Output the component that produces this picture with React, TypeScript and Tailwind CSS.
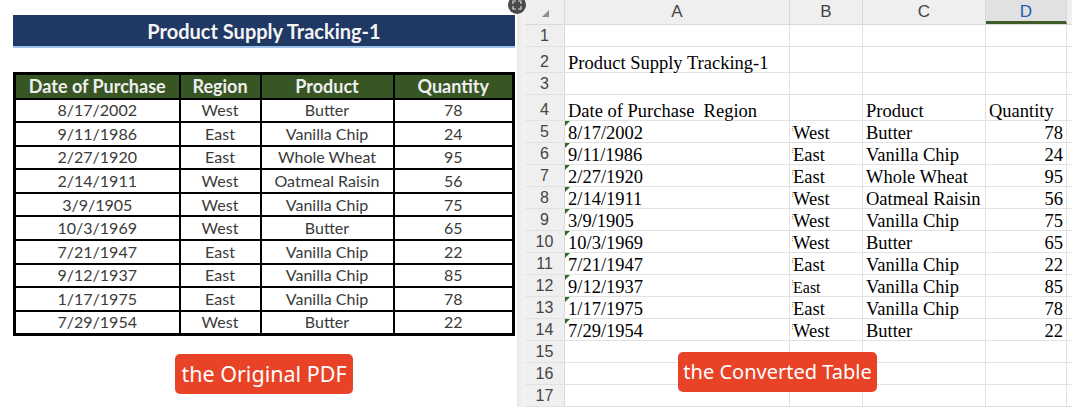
import React from "react";

const pdfRows = [
  ["8/17/2002", "West", "Butter", "78"],
  ["9/11/1986", "East", "Vanilla Chip", "24"],
  ["2/27/1920", "East", "Whole Wheat", "95"],
  ["2/14/1911", "West", "Oatmeal Raisin", "56"],
  ["3/9/1905", "West", "Vanilla Chip", "75"],
  ["10/3/1969", "West", "Butter", "65"],
  ["7/21/1947", "East", "Vanilla Chip", "22"],
  ["9/12/1937", "East", "Vanilla Chip", "85"],
  ["1/17/1975", "East", "Vanilla Chip", "78"],
  ["7/29/1954", "West", "Butter", "22"],
];

const Badge = ({ text, className }: { text: string; className?: string }) => (
  <div
    className={
      "flex h-[40px] items-center justify-center whitespace-nowrap rounded-[5px] bg-[#e84327] text-white font-['Noto_Sans',sans-serif] " +
      (className || "")
    }
  >
    {text}
  </div>
);

const PdfSide = () => (
  <div className="flex w-[517px] shrink-0 flex-col bg-white pl-[13px] pr-[2px] pt-[15px] font-['Lato',sans-serif]">
    {/* title bar */}
    <div className="flex h-[33px] w-[502px] items-center justify-center border-b-2 border-[#9cc2e5] bg-[#203864] text-[20px] font-bold text-[#f4f4f4]">
      Product Supply Tracking-1
    </div>

    <table className="mt-[24px] w-[502px] border-collapse border-[3px] border-black text-[16px] text-[#3a3a3a]">
      <thead>
        <tr className="h-[25px] bg-[#375623] text-[#eeeeee]">
          <th className="w-[165px] border-2 border-black text-[18px] font-bold leading-none">Date of Purchase</th>
          <th className="w-[81px] border-2 border-black text-[18px] font-bold leading-none">Region</th>
          <th className="w-[133px] border-2 border-black text-[18px] font-bold leading-none">Product</th>
          <th className="border-2 border-black text-[18px] font-bold leading-none">Quantity</th>
        </tr>
      </thead>
      <tbody>
        {pdfRows.map((r) => (
          <tr key={r[0]} className="h-[23.6px]">
            {r.map((c, i) => (
              <td key={i} className="border-2 border-black p-0 text-center leading-none">
                {c}
              </td>
            ))}
          </tr>
        ))}
      </tbody>
    </table>

    <div className="mt-[18px] flex justify-center">
      <Badge text="the Original PDF" className="w-[178px] text-[21.5px]" />
    </div>
  </div>
);

type Cell = { text?: string; right?: boolean; small?: boolean; flag?: boolean };

const sheetRows: { h: string; cells: Cell[] }[] = [
  { h: "h-[22px]", cells: [{}, {}, {}, {}] },
  { h: "h-[26px]", cells: [{ text: "Product Supply Tracking-1" }, {}, {}, {}] },
  { h: "h-[22px]", cells: [{}, {}, {}, {}] },
  { h: "h-[26px]", cells: [{ text: "Date of Purchase  Region" }, {}, { text: "Product" }, { text: "Quantity" }] },
  ...pdfRows.map((r, i) => ({
    h: "h-[22px]",
    cells: [
      { text: r[0], flag: true },
      { text: r[1], small: i === 7 },
      { text: r[2] },
      { text: r[3], right: true },
    ],
  })),
  { h: "h-[22px]", cells: [{}, {}, {}, {}] },
  { h: "h-[22px]", cells: [{}, {}, {}, {}] },
  { h: "h-[22px]", cells: [{}, {}, {}, {}] },
];

const colW = ["w-[225px]", "w-[73px]", "w-[123px]", "w-[81px]"];

const SheetSide = () => (
  <div className="relative flex min-w-0 flex-1 flex-col bg-white">
    {/* column headers */}
    <div className="flex h-[25px] border-b border-[#d9d9d9] bg-[#efefef] font-['Liberation_Sans',sans-serif] text-[17px] text-[#444]">
      <div className="relative w-[40px] border-r border-[#d9d9d9]">
        <svg className="absolute left-[17px] top-[10px]" width="7" height="7" viewBox="0 0 7 7">
          <path d="M7 0 L7 7 L0 7 Z" fill="#8c8c8c" />
        </svg>
      </div>
      <div className="flex w-[225px] items-center justify-center border-r border-[#d9d9d9]">A</div>
      <div className="flex w-[73px] items-center justify-center border-r border-[#d9d9d9]">B</div>
      <div className="flex w-[123px] items-center justify-center border-r border-[#d9d9d9]">C</div>
      <div className="flex w-[81px] items-center justify-center border-b-[3px] border-r border-b-[#3f5b27] border-r-[#d9d9d9] bg-[#e1e1e1] pt-[2px] text-[#1e5fb3]">
        D
      </div>
      <div className="flex-1" />
    </div>

    {sheetRows.map((row, ri) => (
      <div key={ri} className={"flex border-b border-[#e1e1e1] " + row.h}>
        <div className="flex w-[40px] items-end justify-center border-r border-[#d9d9d9] bg-[#efefef] pb-[2px] font-['Liberation_Sans',sans-serif] text-[16px] leading-none text-[#444]">
          {ri + 1}
        </div>
        {row.cells.map((c, ci) => (
          <div
            key={ci}
            className={
              "relative flex items-end whitespace-pre border-r border-[#e1e1e1] px-[3px] pb-0 font-['Liberation_Serif',serif] leading-none text-black " +
              colW[ci] +
              (c.right ? " justify-end" : "") +
              (c.small ? " text-[16px]" : " text-[18.5px]")
            }
          >
            {c.flag && (
              <svg className="absolute left-0 top-0" width="5" height="5" viewBox="0 0 5 5">
                <path d="M0 0 L5 0 L0 5 Z" fill="#2f6b23" />
              </svg>
            )}
            {ci === 1 && c.text && ri >= 4 && (
              <span className="absolute left-[2px] top-[5px] h-[5px] border-l border-dotted border-[#d98a2b]" />
            )}
            {c.text}
          </div>
        ))}
        <div className="flex-1" />
      </div>
    ))}

    <Badge text="the Converted Table" className="absolute left-[153px] top-[352px] w-[199px] text-[20px]" />
  </div>
);

export default function App() {
  return (
    <div className="relative flex h-[407px] w-[1072px] overflow-hidden bg-white">
      <PdfSide />
      {/* divider strip */}
      <div className="w-[8px] shrink-0 bg-gradient-to-r from-[#e9e9e9] to-[#f4f4f4]" />
      <SheetSide />
      {/* floating expand button */}
      <div className="absolute left-[508px] top-[-4px] flex h-[18px] w-[18px] items-center justify-center rounded-full bg-[#4a4a4a]">
        <svg width="10" height="10" viewBox="0 0 10 10" fill="none" stroke="#d8d8d8" strokeWidth="1.2">
          <path d="M1 4 V1 H4 M6 1 H9 V4 M9 6 V9 H6 M4 9 H1 V6" />
        </svg>
      </div>
    </div>
  );
}
